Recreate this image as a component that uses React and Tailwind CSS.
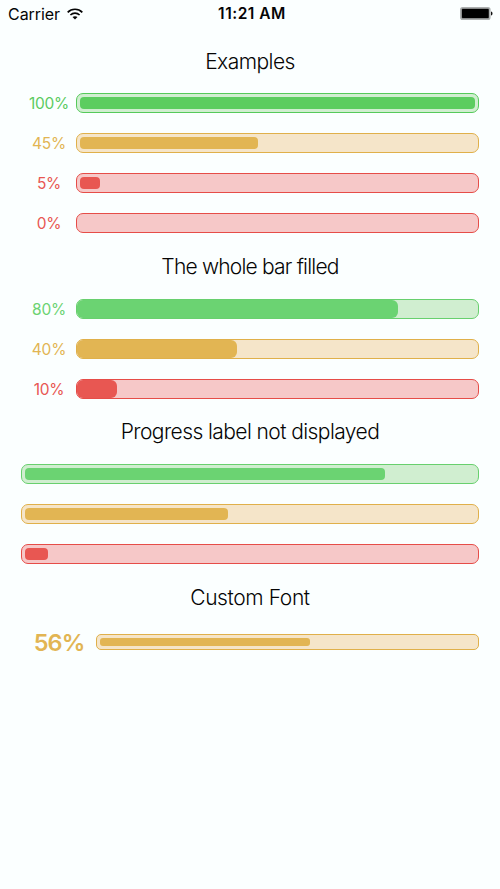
const tones = {
  strong: { text: 'text-[#5ccb5f]', border: 'border-[#55ca5a]', track: 'bg-[#d0eed0]', fill: 'bg-[#5ccd5f]' },
  green: { text: 'text-[#6bd372]', border: 'border-[#68d06e]', track: 'bg-[#d0eed0]', fill: 'bg-[#6bd372]' },
  yellow: { text: 'text-[#e2b553]', border: 'border-[#e0b04a]', track: 'bg-[#f5e5c9]', fill: 'bg-[#e2b553]' },
  red: { text: 'text-[#e85752]', border: 'border-[#e64d48]', track: 'bg-[#f6c8c8]', fill: 'bg-[#e85752]' },
};

function Bar({ tone, value, full, thin }) {
  const t = tones[tone];
  return (
    <div className={`flex-1 border ${t.border} ${t.track} ${thin ? 'h-4 rounded-[5px] p-[3px]' : 'h-5 rounded-[7px]'} ${full || thin ? '' : 'p-[3px]'}`}>
      {value > 0 && (
        <div
          className={`h-full ${t.fill} ${full ? 'rounded-[6px]' : thin ? 'rounded-[3px]' : 'rounded-[4px]'}`}
          style={{ width: `${value}%` }}
        />
      )}
    </div>
  );
}

function Row({ tone, value, full, hideLabel }) {
  return (
    <div className="flex h-5 items-center">
      {!hideLabel && (
        <div className={`w-[55px] pt-px pl-px text-center text-[15.5px] font-normal leading-5 tracking-[-0.25px] ${tones[tone].text}`}>{value}%</div>
      )}
      <Bar tone={tone} value={value} full={full} />
    </div>
  );
}

function Title({ children, spacing }) {
  return (
    <h2 className={`h-6 whitespace-nowrap pt-px text-center text-[21px] font-light leading-6 text-[#050505] ${spacing}`}>{children}</h2>
  );
}

function Wifi() {
  return (
    <svg className="ml-[7px] h-3 w-4" viewBox="0 0 16 12" fill="none" stroke="#050505">
      <path d="M0.7 4.3C4.7 .2 11.3 .2 15.3 4.3" strokeWidth="1.7" />
      <path d="M3.4 7C6 4.5 10 4.5 12.6 7" strokeWidth="1.6" />
      <path d="M8 11.6 5.5 9.1C6.9 7.8 9.1 7.8 10.5 9.1Z" fill="#050505" stroke="none" />
    </svg>
  );
}

function Battery() {
  return (
    <svg className="h-[13px] w-[33px]" viewBox="0 0 33 13">
      <rect x=".8" y=".8" width="29" height="11.6" rx="1.8" fill="#606262" stroke="#adb0b0" strokeWidth="1.6" />
      <rect x="2" y="2" width="26.6" height="9" rx=".7" fill="#000" />
      <path d="M31 4.5c2 .6 2 3.4 0 4Z" fill="#111" />
    </svg>
  );
}

export default function App() {
  return (
    <div className="h-[889px] w-[500px] overflow-hidden bg-[#fbffff] font-['Inter','Liberation_Sans',sans-serif]">
      <header className="grid h-[27px] grid-cols-3 items-center pl-2 pr-[7px] text-[16px] leading-5 text-[#050505]">
        <div className="flex items-center"><span className="tracking-[-0.05px]">Carrier</span><Wifi /></div>
        <div className="whitespace-nowrap pl-[3px] pt-px text-center text-[15.5px] font-semibold tracking-[0.5px]">11:21 AM</div>
        <div className="flex justify-end"><Battery /></div>
      </header>
      <main className="px-[21px] pt-[22px]">
        <section>
          <Title spacing="tracking-[-0.55px]">Examples</Title>
          <div className="mt-5 flex flex-col gap-5">
            <Row tone="strong" value={100} />
            <Row tone="yellow" value={45} />
            <Row tone="red" value={5} />
            <Row tone="red" value={0} />
          </div>
        </section>
        <section className="mt-[21px]">
          <Title spacing="tracking-[-0.8px]">The whole bar filled</Title>
          <div className="mt-[21px] flex flex-col gap-5">
            <Row tone="green" value={80} full />
            <Row tone="yellow" value={40} full />
            <Row tone="red" value={10} full />
          </div>
        </section>
        <section className="mt-5">
          <Title spacing="tracking-[-0.58px]">Progress label not displayed</Title>
          <div className="mt-[21px] flex flex-col gap-5">
            <Row tone="green" value={80} hideLabel />
            <Row tone="yellow" value={45} hideLabel />
            <Row tone="red" value={5} hideLabel />
          </div>
        </section>
        <section className="mt-[21px]">
          <Title spacing="tracking-[-0.4px]">Custom Font</Title>
          <div className="mt-[18px] flex h-[30px] items-center">
            <div className="w-[75px] pl-px pt-px text-center text-[23.5px] font-semibold leading-[30px] tracking-[-0.9px] text-[#e2b553]">56%</div>
            <Bar tone="yellow" value={56} thin />
          </div>
        </section>
      </main>
    </div>
  );
}
